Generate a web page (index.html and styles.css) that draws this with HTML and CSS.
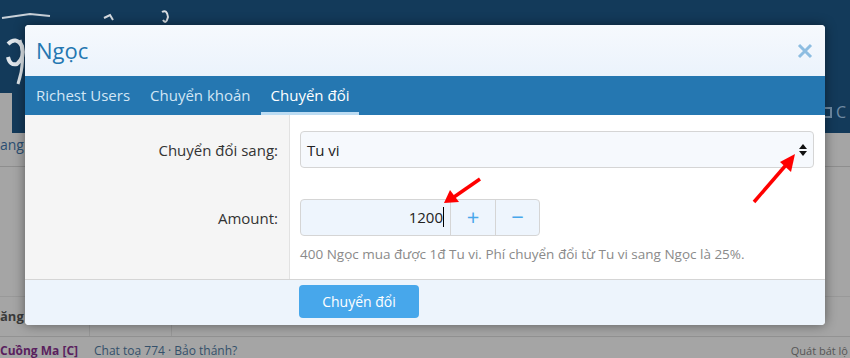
FILE: index.html
```html
<!DOCTYPE html>
<html lang="vi">
<head>
    <meta charset="UTF-8">
    <title>Ngọc</title>
    <link rel="stylesheet" href="styles.css">
</head>
<body>
    <div class="page">
        <div class="site-header">
            <div class="logo">
                <svg width="200" height="93" viewBox="0 0 200 93">
                    <path d="M2 18 L30 14 L50 16" stroke="#c9d1d9" stroke-width="2" fill="none"/>
                    <path d="M8 44 q8 -8 14 2 q3 12 -5 18 q-7 2 -9 -7" stroke="#dfe5ea" stroke-width="4" fill="none"/>
                    <path d="M20 40 q6 20 -2 44" stroke="#dfe5ea" stroke-width="3" fill="none"/>
                    <path d="M104 18 l6 -3 l3 5" stroke="#d9dee3" stroke-width="2" fill="none"/>
                    <path d="M162 12 q5 -3 6 5 q-2 8 -5 3" stroke="#d9dee3" stroke-width="2" fill="none"/>
                </svg>
            </div>
            <div class="nav">
                <div class="nav-gap"></div>
                <div class="nav-right"><span class="nav-icon"></span>C</div>
            </div>
        </div>
        <div class="page-body">
            <div class="crumb">ang</div>
            <div class="table-row">
                <div class="cell cell-a"><b>ăng p</b></div>
                <div class="cell cell-b"></div>
            </div>
            <div class="post-line">
                <span class="user">Cuồng Ma [C]</span>
                <span class="meta">Chat toạ 774 · Bảo thánh?</span>
                <span class="right-meta">Quát bát lộ</span>
            </div>
        </div>
    </div>

    <div class="modal">
        <div class="modal-head">
            <h2 class="modal-title">Ngọc</h2>
            <span class="modal-close">
                <svg width="16" height="16" viewBox="0 0 16 16"><path d="M2 2 L14 14 M14 2 L2 14" stroke="#8dbde1" stroke-width="3"/></svg>
            </span>
        </div>
        <div class="tabs">
            <a class="tab">Richest Users</a>
            <a class="tab">Chuyển khoản</a>
            <a class="tab active">Chuyển đổi</a>
        </div>
        <div class="form">
            <div class="form-row row-select">
                <label class="form-label">Chuyển đổi sang:</label>
                <div class="form-field">
                    <div class="select">
                        <span>Tu vi</span>
                        <span class="select-arrow"><i class="up"></i><i class="down"></i></span>
                    </div>
                </div>
            </div>
            <div class="form-row row-amount">
                <label class="form-label">Amount:</label>
                <div class="form-field">
                    <div class="input-group">
                        <div class="number">1200<span class="caret"></span></div>
                        <div class="step">+</div>
                        <div class="step">&minus;</div>
                    </div>
                    <p class="hint">400 Ngọc mua được 1đ Tu vi. Phí chuyển đổi từ Tu vi sang Ngọc là 25%.</p>
                </div>
            </div>
        </div>
        <div class="modal-foot">
            <button class="btn">Chuyển đổi</button>
        </div>
    </div>

    <svg class="annot" width="850" height="358" viewBox="0 0 850 358">
        <line x1="480" y1="179" x2="454" y2="197" stroke="#f00" stroke-width="3.5"/>
        <polygon points="444,203 450,190 459,202" fill="#f00"/>
        <line x1="754" y1="202" x2="786" y2="165" stroke="#f00" stroke-width="3.5"/>
        <polygon points="795,154 780,162 791,172" fill="#f00"/>
    </svg>
</body>
</html>
```

FILE: styles.css
```css
* {
    margin: 0;
    padding: 0;
    box-sizing: border-box;
}

body {
    width: 850px;
    height: 358px;
    overflow: hidden;
    position: relative;
    background: #a5a5a5;
    font-family: 'Open Sans', 'Noto Sans', sans-serif;
}

/* dimmed page behind the overlay */
.site-header {
    background: #133a5a;
    height: 133px;
    display: flex;
    flex-direction: column;
}

.logo {
    height: 93px;
}

.nav {
    flex: 1;
    display: flex;
    align-items: center;
}

.nav-gap {
    width: 12px;
    height: 100%;
    background: #a5a5a5;
}

.nav-right {
    margin-left: auto;
    display: flex;
    align-items: center;
    gap: 4px;
    color: #6f8aa2;
    font-size: 16px;
    padding-right: 4px;
    margin-top: -2px;
}

.nav-icon {
    width: 12px;
    height: 11px;
    border: 2px solid #6f8aa2;
}

.crumb {
    height: 34px;
    border-bottom: 1px solid #8e8e8e;
    color: #2b4f73;
    font-size: 14px;
    line-height: 24px;
}

.table-row {
    margin-top: 129px;
    display: flex;
    height: 41px;
    border-top: 1px solid #999;
    border-bottom: 1px solid #929292;
}

.cell {
    font-size: 13px;
    color: #3a3a3a;
    padding-top: 10px;
    border-right: 1px solid #979797;
}

.cell-a {
    width: 90px;
}

.cell-b {
    width: 82px;
}

.post-line {
    display: flex;
    gap: 16px;
    font-size: 12px;
    line-height: 14px;
    padding-top: 7px;
    color: #34506a;
}

.user {
    color: #5a1f5e;
    font-weight: bold;
}

.right-meta {
    margin-left: auto;
    font-size: 11px;
    color: #555;
    padding-right: 2px;
}

/* modal */
.modal {
    position: absolute;
    left: 25px;
    top: 25px;
    width: 800px;
    background: #fff;
    border-radius: 4px;
    box-shadow: 0 0 12px rgba(0, 0, 0, 0.45);
    overflow: hidden;
}

.modal-head {
    height: 51px;
    background: linear-gradient(#f6f9fd, #ebf3fc);
    display: flex;
    align-items: center;
    padding: 0 12px 0 11px;
}

.modal-title {
    font-weight: normal;
    font-size: 22px;
    color: #2577b1;
    margin-top: -1px;
}

.modal-close {
    margin-left: auto;
    display: flex;
}

.tabs {
    height: 39px;
    background: #2577b1;
    display: flex;
    padding-left: 1px;
}

.tab {
    padding: 0 10px;
    color: #d2e6f5;
    font-size: 15px;
    line-height: 38px;
    border-bottom: 3px solid transparent;
}

.tab.active {
    color: #fff;
    border-bottom-color: #bcdcf3;
}

.form-row {
    display: flex;
}

.form-label {
    width: 265px;
    background: #f5f5f5;
    border-right: 1px solid #e2e2e2;
    text-align: right;
    padding-right: 11px;
    font-size: 15px;
    color: #333;
}

.form-field {
    flex: 1;
    padding-left: 10px;
    padding-right: 11px;
}

.row-select .form-label {
    padding-top: 25px;
}

.row-select .form-field {
    padding-top: 16px;
}

.select {
    height: 37px;
    border: 1px solid #d5d5d5;
    border-radius: 4px;
    background: #f6f9fd;
    display: flex;
    align-items: center;
    padding: 0 6px;
    font-size: 15px;
    color: #222;
}

.select-arrow {
    margin-left: auto;
    display: flex;
    flex-direction: column;
    gap: 2px;
}

.select-arrow i {
    width: 0;
    height: 0;
    border-left: 4px solid transparent;
    border-right: 4px solid transparent;
}

.select-arrow .up {
    border-bottom: 5px solid #111;
}

.select-arrow .down {
    border-top: 5px solid #111;
}

.row-amount .form-label {
    padding-top: 40px;
}

.row-amount .form-field {
    padding-top: 31px;
    padding-bottom: 16px;
}

.input-group {
    display: flex;
    width: 240px;
    height: 37px;
    border: 1px solid #d5d5d5;
    border-radius: 4px;
    background: #eef5fd;
}

.number {
    width: 150px;
    text-align: right;
    padding-right: 6px;
    font-size: 15px;
    line-height: 35px;
    color: #222;
    border-right: 1px solid #d5d5d5;
}

.caret {
    display: inline-block;
    width: 1px;
    height: 20px;
    background: #000;
    vertical-align: -4px;
}

.step {
    width: 44px;
    text-align: center;
    font-size: 22px;
    line-height: 33px;
    color: #47a7eb;
}

.step + .step {
    border-left: 1px solid #d5d5d5;
}

.hint {
    margin-top: 9px;
    font-size: 13.5px;
    color: #8a8a8a;
}

.modal-foot {
    height: 46px;
    background: #edf4fc;
    border-top: 1px solid #d5d5d5;
    padding: 5px 0 0 274px;
}

.btn {
    width: 120px;
    height: 33px;
    border: none;
    border-radius: 4px;
    background: #47a7eb;
    color: #fff;
    font-family: inherit;
    font-size: 14px;
}

.annot {
    position: absolute;
    left: 0;
    top: 0;
}
```
